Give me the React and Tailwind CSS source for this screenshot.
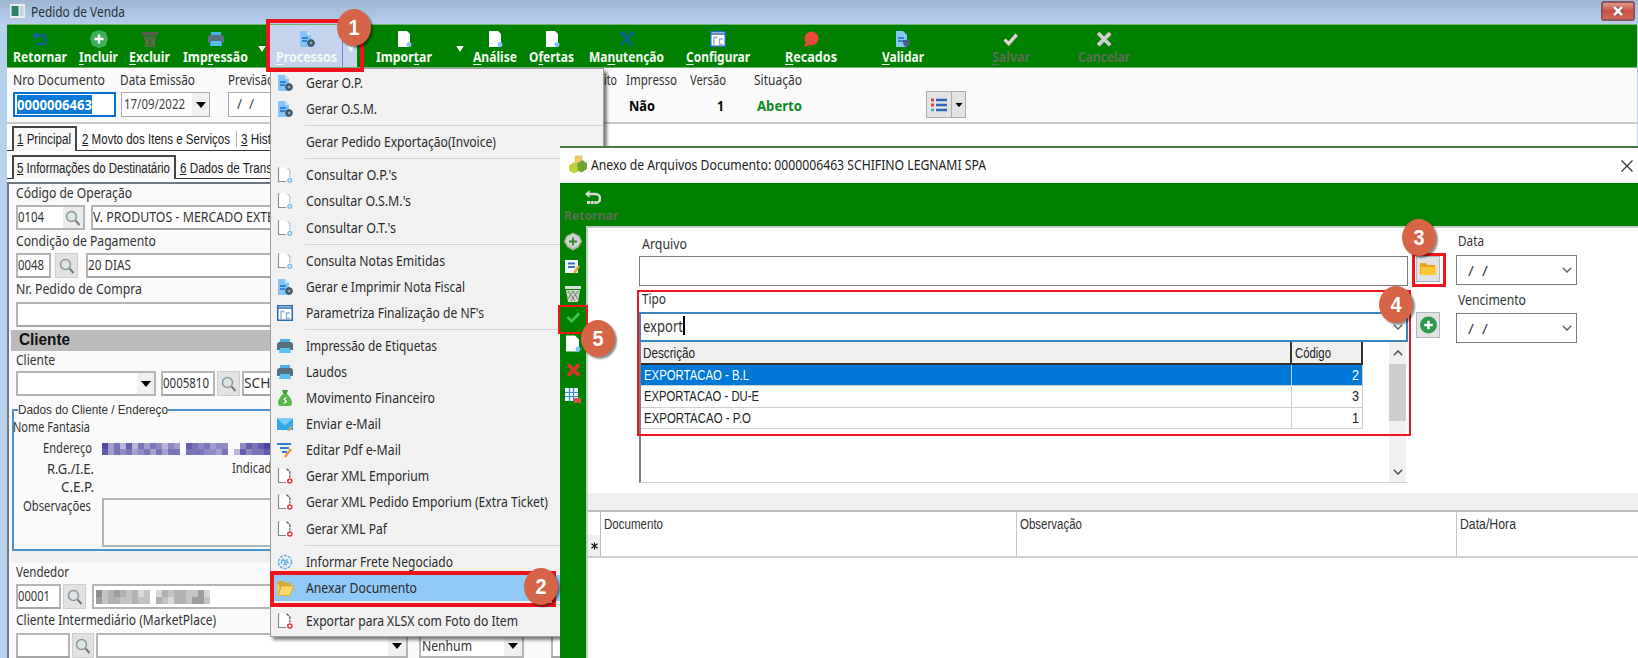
import { useLayoutEffect, useRef, useState } from "react";

// ====================================================================
// Text helpers
// ====================================================================

// "&" marks the mnemonic letter, as in the desktop menus
const mnemonic = (label) => {
  const at = label.indexOf("&");
  if (at < 0) return label;
  return (
    <>
      {label.slice(0, at)}
      <u>{label[at + 1]}</u>
      {label.slice(at + 2)}
    </>
  );
};

// Text squeezed or stretched to a given width
const Fit = ({ w, className = "", children }) => {
  const ref = useRef(null);
  const [ratio, setRatio] = useState(1);

  useLayoutEffect(() => {
    const natural = ref.current.getBoundingClientRect().width;
    if (natural > 0) setRatio((r) => (w * r) / natural);
  }, [w, children]);

  return (
    <span className={`block shrink-0 whitespace-nowrap ${className}`} style={{ width: w }}>
      <span
        ref={ref}
        className="inline-block origin-left whitespace-pre"
        style={{ transform: `scaleX(${ratio})` }}>
        {mnemonic(children)}
      </span>
    </span>
  );
};

const Label = ({ w, className = "", children }) => (
  <Fit w={w} className={`h-4 leading-4 text-[14px] text-[#333] ${className}`}>
    {children}
  </Fit>
);

// ====================================================================
// Icons
// ====================================================================
const Svg = ({ className = "w-4 h-4", children }) => (
  <svg viewBox="0 0 16 16" className={`shrink-0 ${className}`} fill="none">
    {children}
  </svg>
);

const icons = {
  back: (
    <Svg>
      <path d="M0 4.500 5 .5v8z" fill="#14609a" />
      <path d="M3 4.500h8.500a3 3 0 0 1 2.500 3v2.500a3 3 0 0 1-3 3H5" stroke="#14609a" strokeWidth="2.600" />
    </Svg>
  ),
  plus: (
    <Svg className="w-[18px] h-[18px]">
      <path d="M8 0 14 2 16 8 14 14 8 16 2 14 0 8 2 2Z" fill="#3fae5c" />
      <path d="M8 4v8M4 8h8" stroke="#fff" strokeWidth="2.200" />
    </Svg>
  ),
  trash: (
    <Svg>
      <path d="M0 1h16v3.500H0z" fill="#5e5a50" />
      <path d="M2 5.500h12L12.500 14 14 16H2l1.500-2z" fill="#5e6a4a" />
      <path d="m4 6 7 9M12 6l-7 9M8 6v9" stroke="#1f7a1f" />
    </Svg>
  ),
  printer: (
    <Svg>
      <path d="M3 1h10v5H3z" fill="#4ab0e8" />
      <path d="M1.500 4h13L16 6v6H0V6z" fill="#56707f" />
      <path d="M3 10h10l1 5H2z" fill="#58c0f4" />
    </Svg>
  ),
  docGear: (
    <Svg>
      <path d="M1 0h7l4 4v12H1z" fill="#86c5f8" />
      <path d="M8 0v4h4z" fill="#c9e6fd" />
      <path d="M3 7h6M3 10h5" stroke="#1c6fc4" strokeWidth="1.500" />
      <circle cx="12" cy="12" r="2.600" stroke="#41586b" strokeWidth="2.200" />
      <path d="M12 8v8M8 12h8" stroke="#41586b" />
      <circle cx="12" cy="12" r="1.100" fill="#a5b7c4" />
    </Svg>
  ),
  doc: (
    <Svg>
      <path d="M2 0h9l3 3v13H2z" fill="#fff" />
      <circle cx="13" cy="13.500" r="2.500" fill="#7fc4f2" />
    </Svg>
  ),
  tools: (
    <Svg>
      <path d="m2 1 12 14M14 1 2 14" stroke="#0f5fa0" strokeWidth="2.300" />
      <path d="M1 4h4V0M15 4h-4V0" stroke="#0f5fa0" strokeWidth="1.500" />
    </Svg>
  ),
  config: (
    <Svg className="w-4 h-[18px]">
      <path d="M.75.75h14.500v14.500H.75z" fill="#fff" stroke="#2d6cab" strokeWidth="1.500" />
      <path d="M1 3h14" stroke="#2d6cab" strokeWidth="1.500" />
      <path d="M4 14V6.500h3.500M9.500 14V8H13M9.500 13.500H13" stroke="#8ab0d2" strokeWidth="1.300" />
    </Svg>
  ),
  balloon: (
    <Svg>
      <circle cx="8.500" cy="7.500" r="7" fill="#e8493c" />
      <path d="M3 11 1 16l6-2z" fill="#e8493c" />
    </Svg>
  ),
  docShield: (
    <Svg>
      <path d="M1 0h7l4 4v12H1z" fill="#86c5f8" />
      <path d="M3 7h6M3 10h5" stroke="#1c6fc4" strokeWidth="1.500" />
      <path d="M8 9h7v3c0 2-2 3.500-3.500 4C10 15.500 8 14 8 12z" fill="#47637c" />
    </Svg>
  ),
  checkGray: (
    <Svg>
      <path d="m2 9 4 4 8-9" stroke="#8d9488" strokeWidth="3.500" />
      <path d="m1.500 8.500 4 4 8-9" stroke="#dcdcd6" strokeWidth="2.800" />
    </Svg>
  ),
  crossGray: (
    <Svg>
      <path d="m2.500 2.500 12 12M14.500 2.500l-12 12" stroke="#8d9488" strokeWidth="3.800" />
      <path d="m2 2 12 12M14 2 2 14" stroke="#cfcfc9" strokeWidth="3.500" />
    </Svg>
  ),
  query: (
    <Svg className="w-4 h-[18px]">
      <path d="M1 .5h9.500L13 3v11H1z" fill="#fff" />
      <path d="M2.500 1H1.500v13.500H9" stroke="#8c9094" strokeWidth="1.100" />
      <path d="M10.500.8 12.800 3.500V10" stroke="#a9bccb" strokeWidth="1.100" />
      <circle cx="12.800" cy="13.300" r="1.900" stroke="#7fbdec" strokeWidth="1.300" fill="#d8ecfa" />
    </Svg>
  ),
  xml: (
    <Svg className="w-4 h-[18px]">
      <path d="M1 .5h9.500L13 3v11H1z" fill="#fff" />
      <path d="M2.500 1H1.500v13.500H9" stroke="#84888c" strokeWidth="1.100" />
      <path d="M9.500.8 12.800 3.500V9.500" stroke="#555" strokeWidth="1.300" strokeDasharray="3 1" />
      <circle cx="12.800" cy="13" r="2" stroke="#e2383f" strokeWidth="1.500" fill="#fff" />
    </Svg>
  ),
  money: (
    <Svg>
      <path d="M5 0h6L9.500 4h-3z" fill="#3e9b35" />
      <path d="M6 4h4c3 3 5 6 5 9 0 2-1 3-3 3H4c-2 0-3-1-3-3 0-3 2-6 5-9z" fill="#55b848" />
      <path d="M9.500 7.500 7 9l2.500 2.500L7 13.500" stroke="#fff" strokeWidth="1.200" />
    </Svg>
  ),
  mail: (
    <Svg>
      <path d="M0 2.500h16V14H0z" fill="#2fa9ea" />
      <path d="m0 2.500 8 7 8-7z" fill="#7accf7" />
      <path d="m11 15 4-5" stroke="#d9a54a" strokeWidth="2" />
    </Svg>
  ),
  edit: (
    <Svg>
      <path d="M0 2h14M3 6h9M5 10h5" stroke="#2e7fd0" strokeWidth="2" />
      <path d="m8 15 6-8" stroke="#e59a3c" strokeWidth="2.400" />
    </Svg>
  ),
  freight: (
    <Svg>
      <circle cx="8" cy="8" r="6.500" stroke="#67b0e4" strokeWidth="1.500" strokeDasharray="3 1.100" />
      <path d="M6.500 4.500 4.500 7v3M6 6.500h3M10 5v3M6 10.500h4M7 8.500h5" stroke="#67b0e4" strokeWidth="1.300" />
    </Svg>
  ),
  folderOpen: (
    <Svg className="w-[17px] h-[18px]">
      <path d="M0 2 5 1l2 2h6v4H0z" fill="#d9aa2c" />
      <path d="M1 15 4 6h12l-4 9z" fill="#fbdc6a" stroke="#dcae36" />
      <path d="M0 3v12l3-9z" fill="#f0c64c" />
    </Svg>
  ),
  lens: (
    <Svg>
      <circle cx="6.500" cy="6.500" r="5" fill="#dbe4e6" stroke="#8f9899" strokeWidth="1.500" />
      <path d="m10.500 10.500 4 4.500" stroke="#777" strokeWidth="2" />
    </Svg>
  ),
};

const Triangle = ({ className = "text-black" }) => (
  <svg viewBox="0 0 10 6" className={`w-[10px] h-[6px] shrink-0 ${className}`}>
    <path d="M0 0h10L5 6z" fill="currentColor" />
  </svg>
);

const Chevron = ({ className = "" }) => (
  <svg viewBox="0 0 10 6" className={`w-[10px] h-[6px] shrink-0 ${className}`}>
    <path d="m.8.8 4.200 4.200L9.200.8" fill="none" stroke="currentColor" strokeWidth="1.500" />
  </svg>
);

// ====================================================================
// Main window
// ====================================================================
const TitleBar = () => (
  <div className="h-6 shrink-0 flex items-start bg-linear-to-b from-[#9eb8d4] to-[#b6cee9]">
    <svg viewBox="0 0 15 14" className="w-[15px] h-[14px] ml-[10px] mt-1 shrink-0">
      <path d="M0 0h15v14H0z" fill="#e9edf0" />
      <path d="M1.500 2h7v10h-7z" fill="#2f7f68" />
      <path d="M10 2h3.500v10H10z" fill="#c7d3da" />
    </svg>
    <Fit w={94} className="ml-[6px] mt-1 leading-4 text-[14px] text-[#26323f]">
      Pedido de Venda
    </Fit>
    <div className="ml-auto mr-[3px] mt-px w-[34px] h-[20px] rounded-[3px] border-2 border-[#8b5560] bg-linear-to-b from-[#e39a8c] via-[#c9503f] to-[#cf6c55] flex items-center justify-center">
      <svg viewBox="0 0 12 10" className="w-3 h-[10px]">
        <path d="m2 1 8 8M10 1 2 9" stroke="#6b4a50" strokeWidth="4" />
        <path d="m2 1 8 8M10 1 2 9" stroke="#fff" strokeWidth="2.500" />
      </svg>
    </div>
  </div>
);

const ToolButton = ({ label, w, icon, className = "", muted }) => (
  <div className={`flex flex-col items-center pt-[6px] shrink-0 ${className}`}>
    <div className="h-4 flex items-center">{icons[icon]}</div>
    <Fit
      w={w}
      className={`mt-[2px] h-4 leading-4 text-[13.5px] font-bold underline-offset-2 ${
        muted ? "text-[#5c6d56]" : "text-[#f4fbf4]"
      }`}>
      {label}
    </Fit>
  </div>
);

const Toolbar = () => (
  <div className="h-[44px] shrink-0 flex items-start bg-[#008000] border-y border-[#6fb36f] pl-[6px]">
    <ToolButton label="Retornar" w={54} icon="back" />
    <ToolButton label="&Incluir" w={39} icon="plus" className="ml-3" />
    <ToolButton label="&Excluir" w={41} icon="trash" className="ml-[11px]" />
    <ToolButton label="Imp&ressão" w={65} icon="printer" className="ml-[13px]" />
    <Triangle className="ml-[9px] mt-[21px] scale-x-75 text-white" />
    <div className="ml-[2px] w-[88px] h-full bg-[#c6d3ef] flex">
      <ToolButton label="&Processos" w={61} icon="docGear" className="pl-[7px] pr-[5px] border-r border-[#6f8fd0]" />
      <Triangle className="ml-[3px] mt-[21px] scale-x-75 text-white" />
    </div>
    <ToolButton label="Impor&tar" w={56} icon="doc" className="ml-[19px]" />
    <Triangle className="ml-[23px] mt-[21px] scale-x-75 text-white" />
    <ToolButton label="&Análise" w={44} icon="doc" className="ml-2" />
    <ToolButton label="O&fertas" w={45} icon="doc" className="ml-3" />
    <ToolButton label="Ma&nutenção" w={75} icon="tools" className="ml-[15px]" />
    <ToolButton label="&Configurar" w={64} icon="config" className="ml-[22px]" />
    <ToolButton label="&Recados" w={52} icon="balloon" className="ml-[35px]" />
    <ToolButton label="&Validar" w={42} icon="docShield" className="ml-[45px]" />
    <ToolButton label="&Salvar" w={38} icon="checkGray" className="ml-[68px]" muted />
    <ToolButton label="Cancelar" w={52} icon="crossGray" className="ml-[48px]" muted />
  </div>
);

const Header = () => (
  <div className="h-[56px] shrink-0 flex items-start pt-1 pl-[6px] bg-[#fafafa] border-b-2 border-[#c9c9c9]">
    <div className="w-[107px] shrink-0">
      <Label w={92}>Nro Documento</Label>
      <div className="mt-1 w-[103px] h-[25px] border-2 border-[#0b6fd4] bg-white flex items-center px-[2px]">
        <Fit w={75} className="h-[19px] leading-[19px] bg-[#0a78d6] text-white text-[15px] font-bold">
          0000006463
        </Fit>
      </div>
    </div>
    <div className="w-[108px] shrink-0">
      <Label w={75}>Data Emissão</Label>
      <div className="mt-1 ml-px w-[89px] h-[25px] border border-[#a9a9a9] bg-white flex items-center pl-[2px]">
        <Fit w={61} className="-mt-[2px] text-[14px] leading-5 text-[#444]">
          17/09/2022
        </Fit>
        <div className="ml-auto h-full w-[17px] bg-[#f0f0f0] flex items-center justify-center">
          <Triangle />
        </div>
      </div>
    </div>
    <div className="w-[376px] shrink-0">
      <Label w={46}>Previsão</Label>
      <div className="mt-1 w-[80px] h-[25px] border border-[#a9a9a9] bg-white flex items-center pl-2">
        <Fit w={17} className="-mt-[2px] text-[14px] leading-5 text-[#444]">
          /  /
        </Fit>
      </div>
    </div>
    <Label w={13}>ito</Label>
    <div className="ml-[9px] w-[64px] shrink-0">
      <Label w={51}>Impresso</Label>
      <Fit w={26} className="mt-[7px] ml-[3px] leading-5 text-[14.5px] font-bold text-black">
        Não
      </Fit>
    </div>
    <div className="w-[64px] shrink-0">
      <Label w={36}>Versão</Label>
      <Fit w={7} className="mt-[7px] ml-[27px] leading-5 text-[14.5px] font-bold text-black">
        1
      </Fit>
    </div>
    <div className="w-[172px] shrink-0">
      <Label w={48}>Situação</Label>
      <Fit w={45} className="mt-[7px] ml-[3px] leading-5 text-[14.5px] font-bold text-[#0f8a26]">
        Aberto
      </Fit>
    </div>
    <div className="mt-[19px] w-[40px] h-[27px] border border-[#adadad] bg-[#e3e3e3] flex shrink-0">
      <div className="w-[25px] border-r border-[#adadad] flex items-center justify-center">
        <svg viewBox="0 0 16 14" className="w-4 h-[14px]">
          <path d="M0 2h3M0 7h3" stroke="#d2473e" strokeWidth="3" />
          <path d="M0 12h3" stroke="#4aa5c9" strokeWidth="2.500" />
          <path d="M5 2h11M5 7h11M5 12h11" stroke="#2f66b8" strokeWidth="2.500" />
        </svg>
      </div>
      <div className="flex-1 flex items-center justify-center">
        <Triangle className="scale-75 text-black" />
      </div>
    </div>
  </div>
);

const TabText = ({ w, className = "", children }) => (
  <Fit w={w} className={`leading-4 text-[14px] font-['Liberation_Sans',sans-serif] text-[#222] ${className}`}>
    {children}
  </Fit>
);

const Tabs = () => (
  <div className="shrink-0 bg-white">
    <div className="h-[27px] flex items-end pt-[2px]">
      <div className="w-[5px] border-b border-[#333]" />
      <div className="w-[65px] h-[25px] border-2 border-b-0 border-[#444] bg-[#f7f7f7] pt-[3px] pl-[3px]">
        <TabText w={54}>&1 Principal</TabText>
      </div>
      <div className="flex-1 h-[25px] border-b border-[#333] flex pt-[5px]">
        <TabText w={148} className="ml-[5px]">&2 Movto dos Itens e Serviços</TabText>
        <div className="ml-[6px] w-px h-4 bg-[#b5b5b5]" />
        <TabText w={30} className="ml-[4px]">&3 Hist</TabText>
      </div>
    </div>
    <div className="h-[28px] flex items-end">
      <div className="w-[5px] border-b border-[#333]" />
      <div className="w-[164px] h-[24px] border-2 border-b-0 border-[#444] bg-[#f7f7f7] pt-[3px] pl-[3px]">
        <TabText w={153}>&5 Informações do Destinatário</TabText>
      </div>
      <div className="flex-1 h-[24px] border-b border-[#333] flex pt-[5px]">
        <TabText w={92} className="ml-[4px]">&6 Dados de Trans</TabText>
      </div>
    </div>
  </div>
);

const Field = ({ className = "", textW, children }) => (
  <div className={`h-[25px] shrink-0 border-2 border-[#b5b5b5] border-b-[#a5a5a5] bg-white flex items-center ${className}`}>
    {textW && (
      <Fit w={textW} className="-mt-[2px] leading-5 text-[14px] text-[#333]">
        {children}
      </Fit>
    )}
  </div>
);

const LensButton = ({ className = "w-[23px]" }) => (
  <div className={`h-[25px] shrink-0 border border-[#cfcfcf] bg-[#e2e2e2] flex items-center justify-center ${className}`}>
    {icons.lens}
  </div>
);

// Censored value: two rows of blocks with uneven darkness
const Mosaic = ({ levels, color, cell }) => (
  <div className="flex flex-col">
    {levels.map((row, i) => (
      <div key={i} className="flex">
        {row.split("").map((n, j) => (
          <div key={j} className={`shrink-0 ${cell} ${color}`} style={{ opacity: Number(n) / 10 }} />
        ))}
      </div>
    ))}
  </div>
);

const LeftPanel = () => (
  <div className="mt-[3px] flex-1 border-l-2 border-t-2 border-[#6f7780] bg-[#fafafa] pl-[2px] flex flex-col">
    <div className="pl-[5px] pt-px">
      <Label w={116}>Código de Operação</Label>
      <div className="mt-[4px] flex">
        <div className="w-[69px] h-[25px] border-2 border-[#b5b5b5] bg-white flex items-center justify-between">
          <Fit w={26} className="-mt-[2px] leading-5 text-[14px] text-[#333]">
            0104
          </Fit>
          <div className="w-[20px] h-full bg-[#ececec] flex items-center justify-center">{icons.lens}</div>
        </div>
        <Field className="ml-[6px] w-[500px]" textW={181}>
          V. PRODUTOS - MERCADO EXTE
        </Field>
      </div>
      <Label w={140} className="mt-[3px]">Condição de Pagamento</Label>
      <div className="mt-[4px] flex">
        <Field className="w-[35px]" textW={26}>0048</Field>
        <LensButton className="ml-[4px] w-[23px]" />
        <Field className="ml-[8px] w-[500px]" textW={43}>20 DIAS</Field>
      </div>
      <Label w={126} className="mt-[3px]">Nr. Pedido de Compra</Label>
      <Field className="mt-[5px] w-[500px]" />
    </div>

    <div className="mt-[3px] h-[21px] shrink-0 bg-[#bbb] pl-2">
      <Fit w={51} className="leading-[20px] text-[16px] font-bold font-['Liberation_Sans',sans-serif] text-[#111]">
        Cliente
      </Fit>
    </div>

    <div className="pl-[5px]">
      <Label w={39} className="mt-px">Cliente</Label>
      <div className="mt-[3px] flex">
        <div className="w-[140px] h-[25px] border-2 border-[#b5b5b5] bg-white flex justify-end">
          <div className="w-[17px] bg-[#f0f0f0] flex items-center justify-center">
            <Triangle />
          </div>
        </div>
        <Field className="ml-[5px] w-[54px]" textW={46}>0005810</Field>
        <LensButton className="ml-[2px] w-[23px]" />
        <Field className="ml-[2px] w-[400px]" textW={31}>SCHI</Field>
      </div>
    </div>

    <fieldset className="mt-[5px] ml-px h-[150px] shrink-0 border-2 border-r-0 border-[#4b93cf] text-[#333]">
      <legend className="ml-[4px]">
        <Fit w={150} className="h-[18px] leading-[18px] text-[13.5px] font-['Liberation_Sans',sans-serif]">
          Dados do Cliente / Endereço
        </Fit>
      </legend>
      <Label w={77} className="-ml-px">Nome Fantasia</Label>
      <div className="mt-[5px] flex items-start pl-[29px]">
        <Label w={49}>Endereço</Label>
        <div className="ml-[10px] mt-[3px] w-[170px] overflow-hidden">
          <Mosaic
            color="bg-[#241a8c]"
            cell="w-[6px] h-[6px]"
            levels={["8463736465354076564550057678", "7465645646466066655460375667"]}
          />
        </div>
      </div>
      <div className="mt-[5px] flex pl-[33px]">
        <Label w={47}>R.G./I.E.</Label>
        <Label w={51} className="ml-[138px] -mt-px">Indicador</Label>
      </div>
      <Label w={33} className="mt-[2px] ml-[47px]">C.E.P.</Label>
      <div className="flex items-start pl-[9px]">
        <Label w={68} className="mt-[3px]">Observações</Label>
        <div className="ml-[11px] mt-[3px] w-[400px] h-[49px] border-2 border-[#b5b5b5] bg-[#fafafa]" />
      </div>
    </fieldset>
    <div className="h-3 shrink-0 bg-[#f0f0f0]" />

    <div className="pl-[5px]">
      <Label w={53} className="mt-px">Vendedor</Label>
      <div className="mt-[4px] flex">
        <Field className="w-[45px]" textW={32}>00001</Field>
        <LensButton className="ml-[2px] w-[23px]" />
        <div className="ml-[6px] w-[500px] h-[25px] border-2 border-[#b5b5b5] bg-white flex items-center pl-[2px]">
          <Mosaic
            color="bg-[#3c3a3e]"
            cell="w-[6px] h-[7px]"
            levels={["6345434230243443352", "5344334330432443553"]}
          />
        </div>
      </div>
      <Label w={200} className="mt-[3px]">Cliente Intermediário (MarketPlace)</Label>
      <div className="mt-[5px] flex">
        <Field className="w-[54px]" />
        <LensButton className="ml-[2px] w-[22px]" />
        <div className="ml-[2px] w-[312px] h-[25px] border-2 border-[#b5b5b5] bg-white flex justify-end">
          <div className="w-[18px] bg-[#f0f0f0] flex items-center justify-center">
            <Triangle />
          </div>
        </div>
        <div className="ml-[11px] w-[105px] h-[25px] border-2 border-[#b5b5b5] bg-white flex items-center pl-px">
          <Fit w={50} className="leading-5 text-[14px] text-[#333]">
            Nenhum
          </Fit>
          <div className="ml-auto h-full w-[18px] bg-[#f0f0f0] flex items-center justify-center">
            <Triangle />
          </div>
        </div>
        <Field className="ml-[27px] w-[100px]" />
      </div>
    </div>
  </div>
);

// ====================================================================
// "Processos" menu
// ====================================================================
const menuItems = [
  { label: "Gerar O.P.", w: 57, icon: "docGear" },
  { label: "Gerar O.S.M.", w: 71, icon: "docGear" },
  null,
  { label: "Gerar Pedido Exportação(Invoice)", w: 190 },
  null,
  { label: "Consultar O.P.'s", w: 91, icon: "query" },
  { label: "Consultar O.S.M.'s", w: 105, icon: "query" },
  { label: "Consultar O.T.'s", w: 90, icon: "query" },
  null,
  { label: "Consulta Notas Emitidas", w: 139, icon: "query" },
  { label: "Gerar e Imprimir Nota Fiscal", w: 159, icon: "docGear" },
  { label: "Parametriza Finalização de NF's", w: 178, icon: "config" },
  null,
  { label: "Impressão de Etiquetas", w: 131, icon: "printer" },
  { label: "Laudos", w: 41, icon: "printer" },
  { label: "Movimento Financeiro", w: 129, icon: "money" },
  { label: "Enviar e-Mail", w: 75, icon: "mail" },
  { label: "Editar Pdf e-Mail", w: 95, icon: "edit" },
  { label: "Gerar XML Emporium", w: 123, icon: "xml" },
  { label: "Gerar XML Pedido Emporium (Extra Ticket)", w: 242, icon: "xml" },
  { label: "Gerar XML Paf", w: 81, icon: "xml" },
  null,
  { label: "Informar Frete Negociado", w: 147, icon: "freight" },
  { label: "Anexar Documento", w: 111, icon: "folderOpen", active: true },
  null,
  { label: "Exportar para XLSX com Foto do Item", w: 212, icon: "xml" },
];

const ProcessosMenu = () => (
  <div className="absolute left-[270px] top-[68px] w-[334px] h-[569px] bg-[#f1f1f1] border border-[#a0a0a0] pt-px shadow-[3px_3px_3px_rgba(0,0,0,0.5)]">
    {menuItems.map((item, i) =>
      item ? (
        <div
          key={i}
          className={`h-[26.1px] ml-[2px] pl-1 flex items-center ${item.active ? "bg-[#91c9f7]" : ""}`}>
          <div className="w-[29px] shrink-0">{item.icon && icons[item.icon]}</div>
          <Fit w={item.w} className="leading-5 text-[14px] text-[#2b2b2b]">
            {item.label}
          </Fit>
        </div>
      ) : (
        <div key={i} className="h-[7px] flex items-center pl-[34px]">
          <div className="h-px w-full bg-[#d3d3d3]" />
        </div>
      )
    )}
  </div>
);

// ====================================================================
// "Anexo de Arquivos" dialog
// ====================================================================
const SideBar = () => (
  <div className="w-[26px] shrink-0 bg-[#008000] flex flex-col items-center pt-[6px] gap-[8px]">
    <Svg className="w-[18px] h-[19px]">
      <path d="M8 0 14 3 16 8 13 13 8 16 3 13 0 8 2 3Z" fill="#a9b1a5" />
      <path d="M8 1 13 4 14.500 8 12 12 8 14 4 12 1.500 8 3 4Z" fill="#d0d5cd" />
      <path d="M8 4.500v7M4.500 8h7" stroke="#2f8a2f" strokeWidth="1.600" />
    </Svg>
    <Svg className="w-4 h-4">
      <path d="M0 1h13v13H0z" fill="#f2f8fd" />
      <path d="M3 4.500h7M3 8h7" stroke="#2f72c8" strokeWidth="1.800" />
      <path d="m9 14 5-7" stroke="#e9a23b" strokeWidth="2.500" />
    </Svg>
    <Svg className="w-4 h-[18px] mt-[2px]">
      <path d="M0 0h16v3H0z" fill="#d8dcd4" />
      <path d="M1 4h14l-2 12H3z" fill="#cfd4ca" />
      <path d="m3 5 7 10M8 5l5 8M13 5 6 15M8 5l-5 8" stroke="#6f7c68" />
    </Svg>
    <Svg className="w-[15px] h-[15px] -mt-px">
      <path d="m1.500 7.500 4.500 4.500L14 3.500" stroke="#44c044" strokeWidth="3" />
    </Svg>
    <Svg className="w-4 h-[17px] mt-[2px]">
      <path d="M1 0h9l4 4v12H1z" fill="#fff" />
      <circle cx="13" cy="13.500" r="2.500" fill="#7fc4f2" />
    </Svg>
    <Svg className="w-[15px] h-[16px] mt-[2px]">
      <path d="m2 2 12 12M14 2 2 14" stroke="#d6342c" strokeWidth="3.800" />
    </Svg>
    <Svg className="w-4 h-[18px] mt-px">
      <path d="M0 0h13v13H0z" fill="#e9f3fc" />
      <path d="M0 4.500h13M0 8.500h13M4.500 0v13M8.500 0v13" stroke="#3f87c9" strokeWidth="1.200" />
      <path d="M9 10h7v5H9z" fill="#d9503f" />
    </Svg>
  </div>
);

const rows = [
  { name: "EXPORTACAO - B.L", w: 105, code: "2", selected: true },
  { name: "EXPORTACAO - DU-E", w: 115, code: "3" },
  { name: "EXPORTACAO - P.O", w: 107, code: "1" },
];

const GridText = ({ w, className = "", children }) => (
  <Fit w={w} className={`leading-5 text-[14px] font-['Liberation_Sans',sans-serif] ${className}`}>
    {children}
  </Fit>
);

const TipoList = () => (
  <div className="w-[769px] h-[141px] border-l-2 border-l-[#7d7d7d] border-b border-b-[#d5d5d5] bg-white flex">
    <div className="w-[722px]">
      <div className="h-[23px] flex bg-[#f0f0f0] border-b-2 border-[#333] text-[#222]">
        <div className="w-[651px] pl-[2px] pt-px border-r-2 border-[#333]">
          <GridText w={52}>Descrição</GridText>
        </div>
        <div className="w-[71px] pl-[3px] pt-px border-r-2 border-[#333]">
          <GridText w={36}>Código</GridText>
        </div>
      </div>
      {rows.map((row) => (
        <div
          key={row.code}
          className={`h-[21.300px] flex border-b border-[#cfcfcf] ${
            row.selected ? "bg-[#0078d7] text-white" : "text-[#222]"
          }`}>
          <div className="w-[651px] pl-[3px] border-r border-[#cfcfcf]">
            <GridText w={row.w}>{row.name}</GridText>
          </div>
          <div className="w-[71px] pr-[3px] flex justify-end border-r border-[#cfcfcf]">
            <GridText w={7}>{row.code}</GridText>
          </div>
        </div>
      ))}
    </div>
    <div className="ml-auto mr-[2px] w-[17px] bg-[#f0f0f0] flex flex-col items-center text-[#505050]">
      <Chevron className="mt-[8px] rotate-180" />
      <div className="mt-[8px] w-full h-[57px] bg-[#cdcdcd]" />
      <Chevron className="mt-auto mb-[7px]" />
    </div>
  </div>
);

const DateBox = () => (
  <div className="w-[121px] h-[30px] border border-[#7a7a7a] bg-white flex items-center pl-[11px] pr-[4px]">
    <Fit w={20} className="text-[15px] leading-5 text-[#444]">
      /  /
    </Fit>
    <Chevron className="ml-auto text-[#666]" />
  </div>
);

const Dialog = () => (
  <div className="absolute left-[560px] top-[146px] w-[1078px] h-[512px] bg-white border-t-2 border-[#4b774b] flex flex-col">
    <div className="h-[35px] shrink-0 flex items-center pl-[9px] pr-[5px]">
      <Svg className="w-[18px] h-[19px] -mt-[3px]">
        <rect x="5" y="0" width="7" height="9" rx="1" fill="#ecc66a" />
        <path d="m0 9 4-3 5 3v5l-5 2-4-3z" fill="#c2cf3c" />
        <path d="m7 7 5-3 4 3v5l-5 3-3-2z" fill="#6fa32c" />
      </Svg>
      <Fit w={395} className="ml-1 -mt-[3px] leading-5 text-[15px] text-[#222]">
        Anexo de Arquivos Documento: 0000006463 SCHIFINO LEGNAMI SPA
      </Fit>
      <svg viewBox="0 0 12 12" className="ml-auto w-3 h-3">
        <path d="m.5.5 11 11M11.500.5l-11 11" stroke="#333" strokeWidth="1.200" />
      </svg>
    </div>

    <div className="h-[43px] shrink-0 bg-[#008000] flex flex-col items-start pl-[4px] pt-[7px]">
      <Svg className="w-4 h-4 ml-[21px]">
        <path d="M0 4 4.500 0v8z" fill="#d8ddd4" />
        <path d="M3 4h7.500a4 4 0 0 1 0 9" stroke="#d8ddd4" strokeWidth="2.600" />
        <path d="M2 12.500h9" stroke="#d8ddd4" strokeWidth="3" strokeDasharray="3 .7" />
      </Svg>
      <Fit w={54} className="mt-px leading-4 text-[13px] font-bold text-[#5c6d56]">
        Retornar
      </Fit>
    </div>

    <div className="flex-1 flex">
      <SideBar />
      <div className="flex-1 border-l-2 border-t-2 border-[#c3cfc3] bg-white flex flex-col">
        <div className="h-[265px] shrink-0 flex items-start pl-[51px]">
          <div className="w-[769px] shrink-0">
            <Label w={45} className="mt-[8px] ml-[3px]">Arquivo</Label>
            <div className="mt-[4px] h-[30px] border border-[#7a7a7a]" />
            <Label w={24} className="mt-[5px] ml-[3px]">Tipo</Label>
            <div className="mt-[5px] h-[30px] border-2 border-[#3d84bd] flex items-center pl-[2px] pr-[3px]">
              <Fit w={40} className="-mt-[3px] leading-5 text-[16px] text-[#333]">
                export
              </Fit>
              <div className="-mt-[3px] w-[1.5px] h-[19px] bg-black" />
              <Chevron className="ml-auto text-[#666]" />
            </div>
            <TipoList />
          </div>
          <div className="ml-[8px] mt-[28px] w-[24px] shrink-0">
            <div className="h-[26px] border border-[#adb9c1] bg-[#e2e2e2] flex items-center justify-center">
              <Svg>
                <path d="M0 2h6l1.500 2H15v9H0z" fill="#f0a21c" />
                <path d="M1 14V6h15v8z" fill="#fcc934" />
              </Svg>
            </div>
            <div className="mt-[30px] h-[26px] border border-[#adb9c1] bg-[#e2e2e2] flex items-center justify-center">
              <Svg className="w-[17px] h-[18px]">
                <circle cx="8" cy="8" r="8" fill="#2c9a4b" />
                <path d="M8 4v8M4 8h8" stroke="#fff" strokeWidth="2.300" />
              </Svg>
            </div>
          </div>
          <div className="ml-[16px] shrink-0">
            <Label w={26} className="mt-[5px] ml-[2px]">Data</Label>
            <div className="mt-[6px]">
              <DateBox />
            </div>
            <Label w={68} className="mt-[7px] ml-[2px]">Vencimento</Label>
            <div className="mt-[5px]">
              <DateBox />
            </div>
          </div>
        </div>

        <div className="h-[19px] shrink-0 bg-[#efefef] border-b-2 border-[#b9bec2]" />
        <div className="h-[46px] shrink-0 flex border-b-2 border-[#d0d0d0] text-[#333]">
          <div className="w-[13px] border-r border-[#bcbcbc] flex items-end">
            <div className="w-full h-[21px] bg-[#f0f0f0] flex items-center justify-center">
              <svg viewBox="0 0 8 8" className="w-[7px] h-[8px]">
                <path d="M4 0v8M.5 1.500l7 5M7.500 1.500l-7 5" stroke="#111" strokeWidth="1.300" />
              </svg>
            </div>
          </div>
          <div className="w-[416px] pl-[3px] pt-[2px] border-r border-[#c4c4c4]">
            <GridText w={59}>Documento</GridText>
          </div>
          <div className="w-[440px] pl-[3px] pt-[2px] border-r border-[#c4c4c4]">
            <GridText w={62}>Observação</GridText>
          </div>
          <div className="flex-1 pl-[3px] pt-[2px]">
            <GridText w={56}>Data/Hora</GridText>
          </div>
        </div>
      </div>
    </div>
  </div>
);

// ====================================================================
// Step markers
// ====================================================================
const Step = ({ className, children }) => (
  <div
    className={`absolute w-[34px] h-[37px] rounded-[50%] bg-[#d66547] shadow-[2px_2px_2px_rgba(0,0,0,0.45)] flex items-center justify-center text-white font-bold text-[22px] leading-none font-['Liberation_Sans',sans-serif] ${className}`}>
    <span className="scale-x-90">{children}</span>
  </div>
);

const Frame = ({ className }) => <div className={`absolute border-[#f0141e] ${className}`} />;

export default function App() {
  return (
    <div className="relative w-[1638px] h-[658px] overflow-hidden bg-[#b5d1ee] flex flex-col font-['Noto_Sans','Open_Sans',sans-serif]">
      <TitleBar />
      <div className="flex-1 ml-[7px] mr-px flex flex-col bg-white">
        <Toolbar />
        <Header />
        <Tabs />
        <LeftPanel />
      </div>

      <ProcessosMenu />
      <Dialog />

      <Frame className="left-[266px] top-[19px] w-[98px] h-[53px] border-4" />
      <Frame className="left-[270px] top-[571px] w-[286px] h-[36px] border-4" />
      <Frame className="left-[1412px] top-[253px] w-[34px] h-[34px] border-[3px]" />
      <Frame className="left-[637px] top-[290px] w-[774px] h-[146px] border-2" />
      <Frame className="left-[558px] top-[305px] w-[30px] h-[29px] border-2" />
      <Step className="left-[337px] top-[9px]">1</Step>
      <Step className="left-[524px] top-[568px]">2</Step>
      <Step className="left-[1402px] top-[219px]">3</Step>
      <Step className="left-[1379px] top-[286px]">4</Step>
      <Step className="left-[581px] top-[320px]">5</Step>
    </div>
  );
}
